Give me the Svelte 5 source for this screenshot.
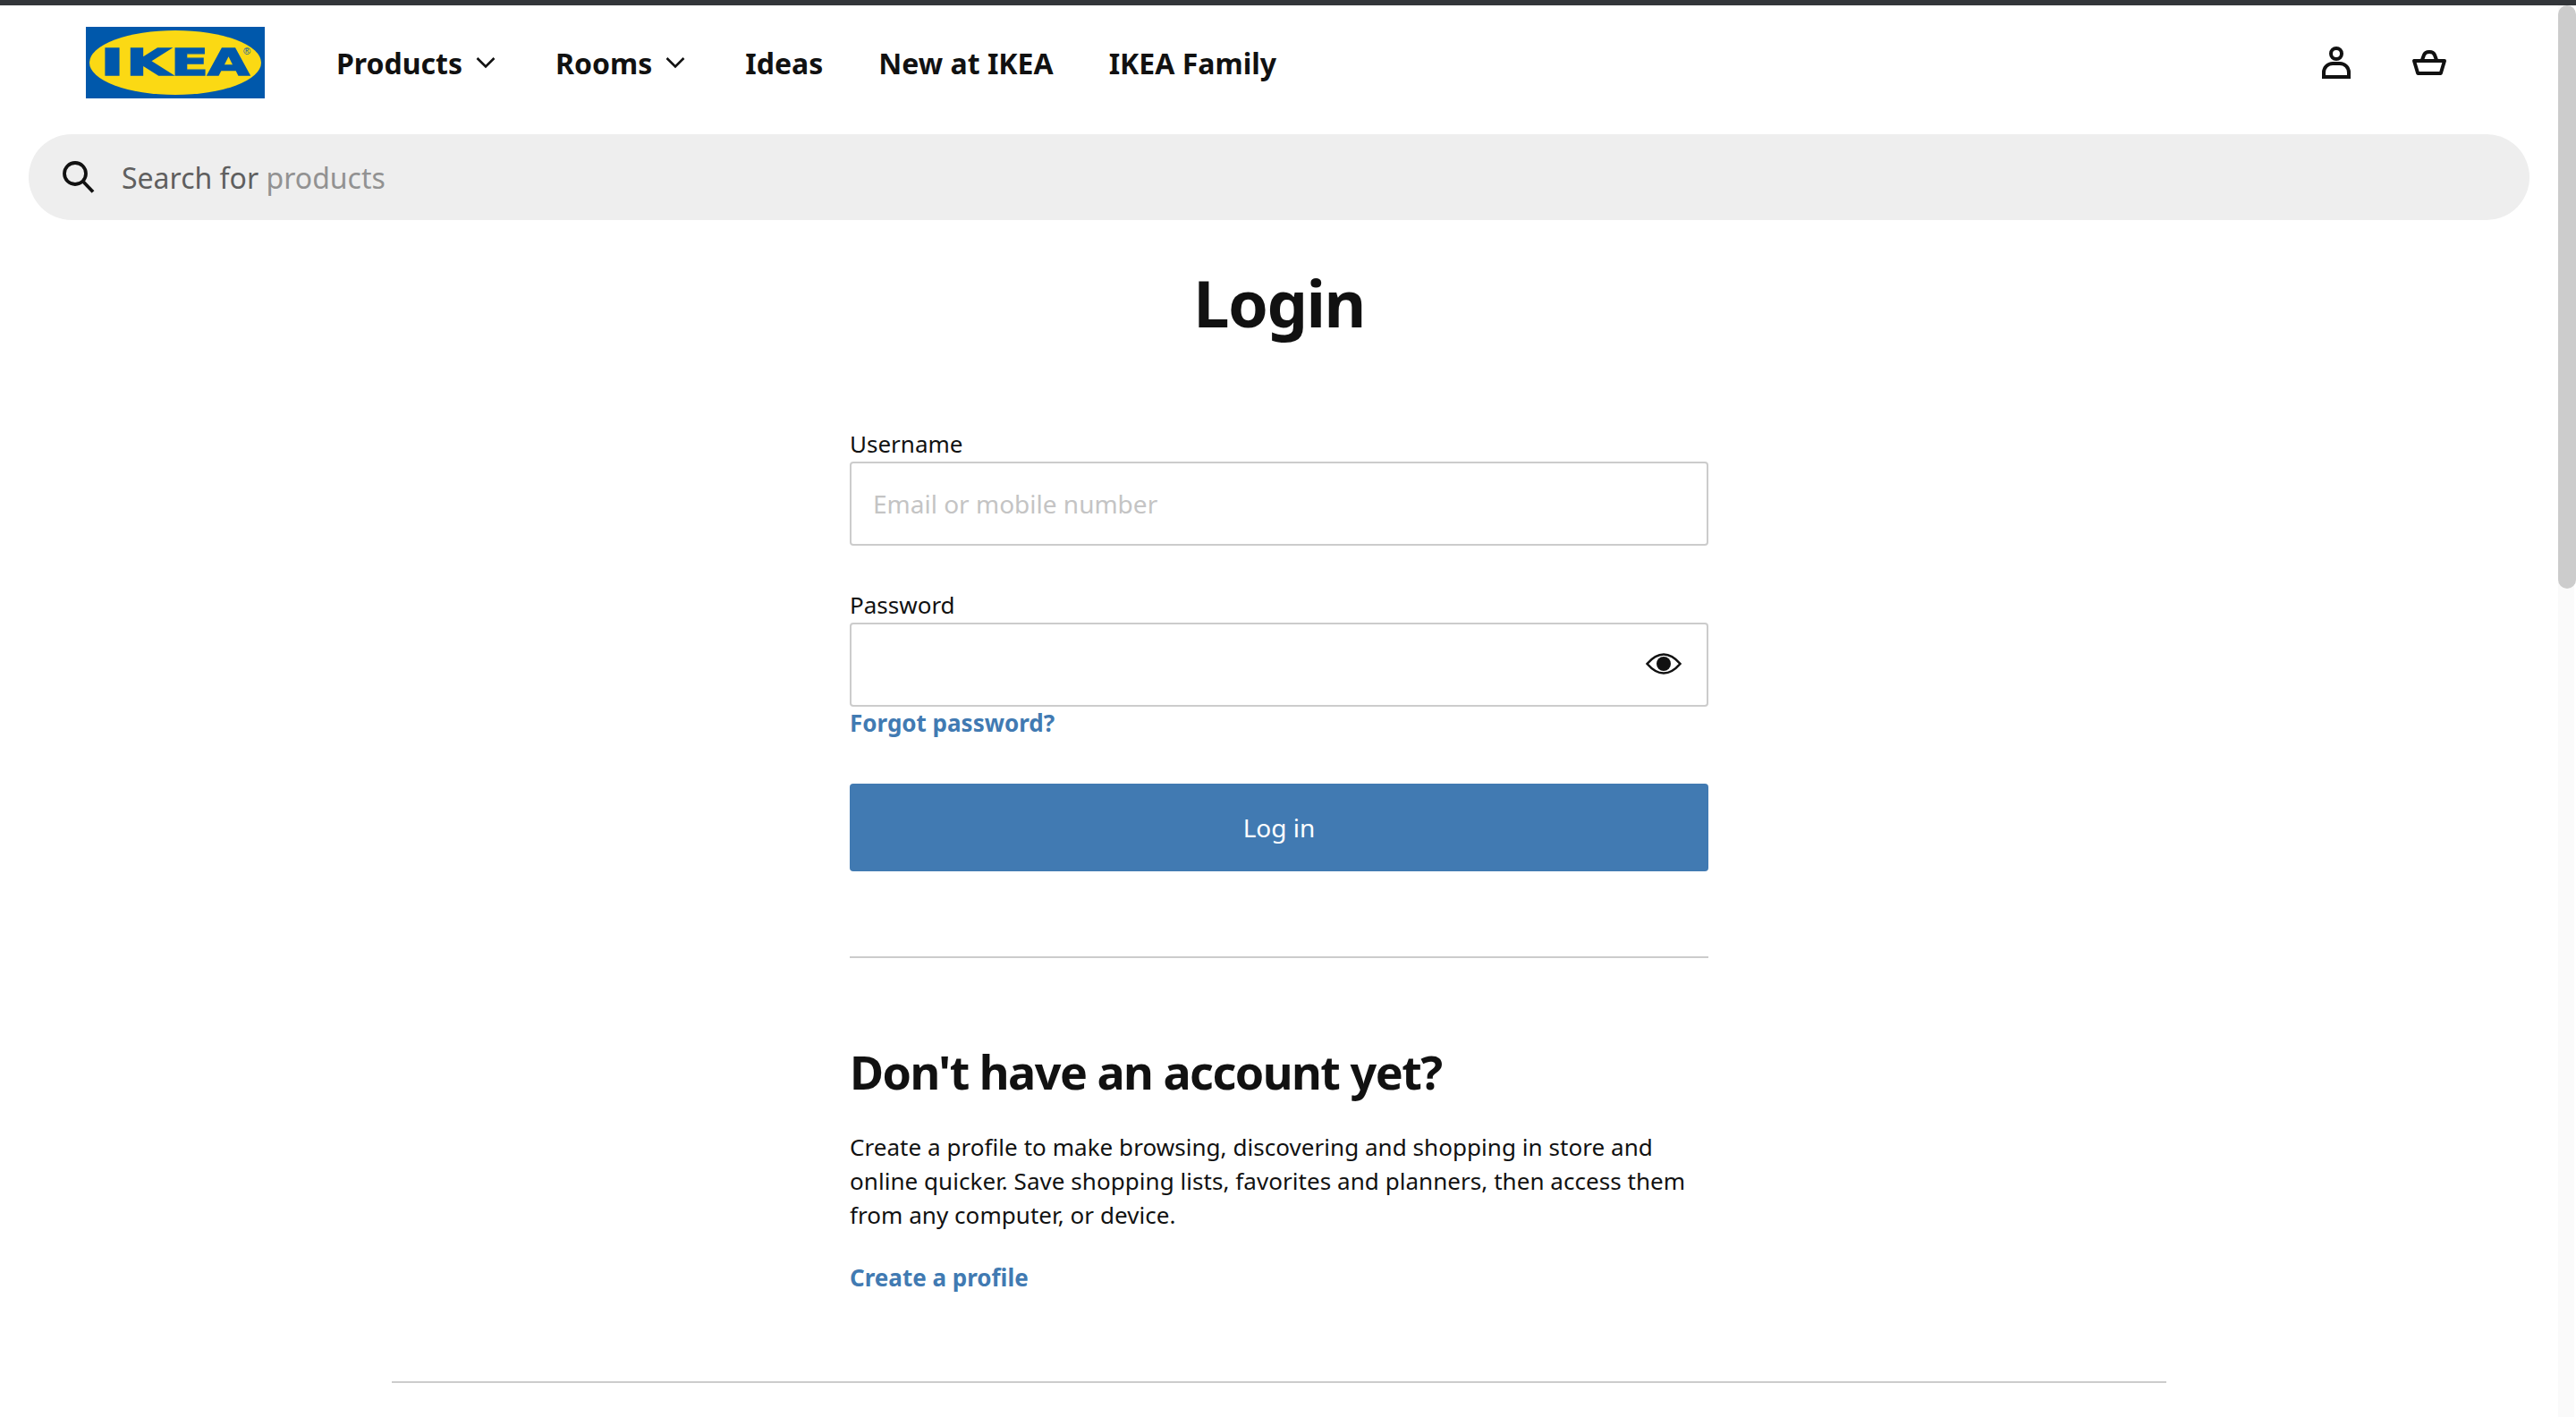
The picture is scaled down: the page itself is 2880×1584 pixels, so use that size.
<script lang="ts">
  const navItems = [
    { label: "Products", menu: true },
    { label: "Rooms", menu: true },
    { label: "Ideas", menu: false },
    { label: "New at IKEA", menu: false },
    { label: "IKEA Family", menu: false },
  ];

  // the logo's letters have uneven widths, so each one gets its own slot
  const logoLetters = [
    { ch: "I", x: 16, w: 27 },
    { ch: "K", x: 45, w: 50 },
    { ch: "E", x: 95, w: 42 },
    { ch: "A", x: 136, w: 47 },
  ];
</script>

<div class="topbar"></div>
<div class="page">
  <div class="content">
    <header>
      <a class="logo" href="#home" aria-label="IKEA">
        <svg width="200" height="80" viewBox="0 0 200 80">
          <rect width="200" height="80" fill="#0058ab" />
          <ellipse cx="100" cy="40" rx="96" ry="36" fill="#fbd914" />
          {#each logoLetters as l}
            <text class="logo-word" x={l.x} y="54" textLength={l.w} lengthAdjust="spacingAndGlyphs">{l.ch}</text>
          {/each}
          <text class="logo-mark" x="176" y="31">®</text>
        </svg>
      </a>
      <nav>
        {#each navItems as item}
          <a href="#nav" class="nav-item">
            {item.label}
            {#if item.menu}
              <svg class="chevron" width="32" height="32" viewBox="0 0 32 32">
                <path d="M6.5 11 16 20.5 25.5 11" fill="none" stroke="#111" stroke-width="2.6" />
              </svg>
            {/if}
          </a>
        {/each}
      </nav>
      <div class="actions">
        <svg width="32" height="36" viewBox="0 0 32 36" aria-label="Profile">
          <circle cx="16" cy="8" r="6" fill="none" stroke="#111" stroke-width="4" />
          <path d="M2 34V29A10 10 0 0 1 12 19H20A10 10 0 0 1 30 29V34Z" fill="none" stroke="#111" stroke-width="4" />
        </svg>
        <svg width="40" height="28" viewBox="0 0 40 28" aria-label="Basket">
          <path d="M3 12H37L32.8 26H7.2Z" fill="none" stroke="#111" stroke-width="4" stroke-linejoin="round" />
          <path d="M12 11 14 5.5Q15.2 2 20 2T26 5.5L28 11" fill="none" stroke="#111" stroke-width="4" />
        </svg>
      </div>
    </header>

    <div class="search">
      <svg width="36" height="36" viewBox="0 0 36 36">
        <circle cx="14" cy="14" r="12" fill="none" stroke="#111" stroke-width="3.8" />
        <path d="M22.5 22.5 34 34.5" fill="none" stroke="#111" stroke-width="3.8" />
      </svg>
      <span class="search-text">Search for <span class="search-hint">products</span></span>
    </div>

    <main>
      <h1>Login</h1>
      <div class="column">
        <label for="username">Username</label>
        <input id="username" type="text" placeholder="Email or mobile number" />

        <label class="second" for="password">Password</label>
        <div class="password">
          <input id="password" type="password" />
          <svg class="eye" width="40" height="24" viewBox="0 0 40 24">
            <path d="M1.5 12C8 4.5 14 1.5 20 1.5S32 4.5 38.5 12C32 19.5 26 22.5 20 22.5S8 19.5 1.5 12Z" fill="none" stroke="#111" stroke-width="2.6" />
            <circle cx="20" cy="12" r="8" fill="#111" />
          </svg>
        </div>
        <a class="link forgot" href="#forgot">Forgot password?</a>

        <button type="button">Log in</button>

        <hr />

        <h2>Don't have an account yet?</h2>
        <p>
          Create a profile to make browsing, discovering and shopping in store and
          online quicker. Save shopping lists, favorites and planners, then access them
          from any computer, or device.
        </p>
        <a class="link create" href="#create">Create a profile</a>
      </div>
      <hr class="wide" />
    </main>
  </div>
  <div class="scrollbar"><div class="thumb"></div></div>
</div>

<style>
  :global(html), :global(body) {
    margin: 0;
    overflow: hidden;
    background: #fff;
  }

  .topbar {
    height: 6px;
    background: #33363a;
  }

  .page {
    display: flex;
    height: 1578px;
    font-family: "Noto Sans", sans-serif;
    color: #111;
  }

  .content {
    flex: 1;
    min-width: 0;
  }

  .scrollbar {
    width: 20px;
    background: linear-gradient(to right, #fafafa 18px, #fff 18px);
  }

  .thumb {
    height: 652px;
    background: #ccc;
    border-radius: 10px;
  }

  header {
    display: flex;
    align-items: center;
    padding: 24px 124px 0 96px;
  }

  .logo {
    display: block;
    height: 80px;
  }

  .logo svg {
    display: block;
  }

  .logo-word {
    font-family: "DejaVu Sans", sans-serif;
    font-weight: 700;
    font-size: 40px;
    fill: #0058ab;
    stroke: #0058ab;
    stroke-width: 1.4px;
  }

  .logo-mark {
    font-family: "Liberation Sans", sans-serif;
    font-size: 11px;
    fill: #0058ab;
  }

  nav {
    display: flex;
    align-items: center;
    gap: 62px;
    margin-left: 80px;
    flex: 1;
  }

  .nav-item {
    display: flex;
    align-items: center;
    gap: 10px;
    font-size: 32px;
    font-weight: 700;
    color: #111;
    text-decoration: none;
  }

  .actions {
    display: flex;
    align-items: center;
    gap: 68px;
  }

  .search {
    display: flex;
    align-items: center;
    gap: 30px;
    height: 96px;
    margin: 40px 32px 0;
    padding-left: 38px;
    background: #eee;
    border-radius: 48px;
  }

  .search-text {
    font-size: 32px;
    color: #5f5f5f;
  }

  .search-hint {
    color: #929292;
  }

  main {
    display: flex;
    flex-direction: column;
    align-items: center;
  }

  h1 {
    margin: 44px 0 0;
    font-size: 72px;
    line-height: 96px;
    font-weight: 700;
    letter-spacing: -1.5px;
  }

  .column {
    display: flex;
    flex-direction: column;
    width: 960px;
    margin-top: 94px;
  }

  label {
    padding-bottom: 4px;
    font-size: 26px;
    line-height: 32px;
    color: #111;
  }

  .second {
    margin-top: 50px;
  }

  input {
    display: block;
    width: 100%;
    height: 94px;
    box-sizing: border-box;
    padding: 0 24px;
    font-family: inherit;
    font-size: 28px;
    border: 2px solid #ccc;
    border-radius: 4px;
    background: #fff;
    outline: none;
  }

  input::placeholder {
    color: #c4c4c4;
    opacity: 1;
  }

  .password {
    position: relative;
  }

  .eye {
    position: absolute;
    top: 34px;
    right: 30px;
  }

  .link {
    font-size: 26px;
    font-weight: 700;
    color: #417ab2;
    text-decoration: none;
    line-height: 36px;
  }

  button {
    height: 98px;
    margin-top: 50px;
    font-family: inherit;
    font-size: 28px;
    color: #fff;
    background: #417ab2;
    border: none;
    border-radius: 4px;
  }

  hr {
    width: 100%;
    height: 2px;
    margin: 95px 0 0;
    background: #ccc;
    border: none;
  }

  h2 {
    margin: 89px 0 0;
    font-size: 52px;
    line-height: 76px;
    font-weight: 700;
    letter-spacing: -1.5px;
  }

  p {
    margin: 27px 0 0;
    font-size: 26px;
    line-height: 38px;
    letter-spacing: 0.05px;
  }

  .create {
    margin-top: 33px;
  }

  .wide {
    width: 1984px;
    margin-top: 98px;
  }
</style>
